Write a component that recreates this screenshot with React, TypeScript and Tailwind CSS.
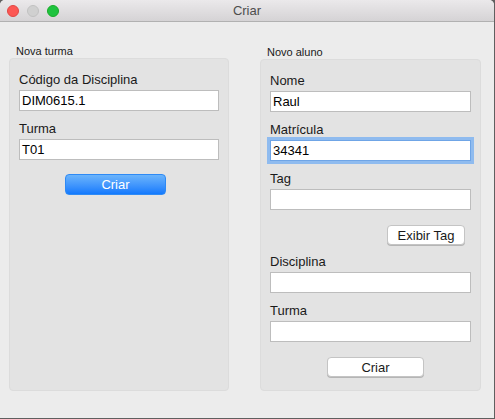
const font = { fontFamily: '"Liberation Sans", Arial, sans-serif' };

const Field = ({ label, value, focused, first }: { label: string; value?: string; focused?: boolean; first?: boolean }) => (
  <div className={first ? "" : "mt-[10px]"}>
    <div className="text-[13px] leading-[16px] text-[#1a1a1a]">{label}</div>
    <div
      className={`mt-[2px] h-[21px] bg-white border flex items-center px-[2px] text-[13px] text-black ${
        focused
          ? "border-[#6fa5e6] shadow-[0_0_0_3px_#8fbbef]"
          : "border-[#bdbdbd]"
      }`}
    >
      {value}
    </div>
  </div>
);

export default function App() {
  return (
    <div className="w-[495px] h-[419px] bg-[#5f5f5f]" style={font}>
      <div className="w-[494px] h-[418px] bg-[#ececec] flex flex-col rounded-t-[5px] overflow-hidden">
        {/* Title bar */}
        <div className="h-[22px] flex items-center relative bg-gradient-to-b from-[#ebe9eb] to-[#d5d3d5] border-b border-[#b1b1b1]">
          <div className="flex items-center gap-[8px] pl-[7px]">
            <span className="w-[12px] h-[12px] rounded-full bg-[#fc5753] border border-[#df4744]" />
            <span className="w-[12px] h-[12px] rounded-full bg-[#d0d0d0] border border-[#c1c1c1]" />
            <span className="w-[12px] h-[12px] rounded-full bg-[#1fc33f] border border-[#1aab29]" />
          </div>
          <div className="absolute inset-0 flex items-center justify-center text-[13px] text-[#4d4d4d]">Criar</div>
        </div>

        {/* Content */}
        <div className="flex-1 flex pt-[22px] pb-[27px] pl-[9px] gap-[31px]">
          {/* Nova turma */}
          <div className="w-[220px] flex flex-col">
            <div className="text-[11px] leading-[14px] pl-[7px] text-[#1a1a1a]">Nova turma</div>
            <div className="flex-1 bg-[#e3e3e3] border border-[#dcdcdc] rounded-[4px] px-[9px] pt-[13px]">
              <Field label="Código da Disciplina" value="DIM0615.1" first />
              <Field label="Turma" value="T01" />
              <div className="flex mt-[14px] pl-[46px]">
                <button className="w-[101px] h-[21px] rounded-[4px] text-[13px] text-white bg-gradient-to-b from-[#6bb4fb] to-[#1079fd] border border-[#2e8af5]">
                  Criar
                </button>
              </div>
            </div>
          </div>

          {/* Novo aluno */}
          <div className="w-[221px] flex flex-col pt-[1px]">
            <div className="text-[11px] leading-[14px] pl-[7px] text-[#1a1a1a]">Novo aluno</div>
            <div className="flex-1 bg-[#e3e3e3] border border-[#dcdcdc] rounded-[4px] px-[9px] pt-[13px]">
              <Field label="Nome" value="Raul" first />
              <Field label="Matrícula" value="34341" focused />
              <Field label="Tag" />
              <div className="flex justify-end mt-[15px] pr-[6px]">
                <button className="w-[78px] h-[20px] rounded-[4px] text-[13px] text-[#1a1a1a] bg-white border border-[#c4c4c4] shadow-[0_1px_0_#b5b5b5]">
                  Exibir Tag
                </button>
              </div>
              <div className="mt-[-1px]">
                <Field label="Disciplina" />
              </div>
              <Field label="Turma" />
              <div className="flex mt-[15px] pl-[57px]">
                <button className="w-[97px] h-[20px] rounded-[4px] text-[13px] text-[#1a1a1a] bg-white border border-[#c4c4c4] shadow-[0_1px_0_#b5b5b5]">
                  Criar
                </button>
              </div>
            </div>
          </div>
        </div>
      </div>
    </div>
  );
}
